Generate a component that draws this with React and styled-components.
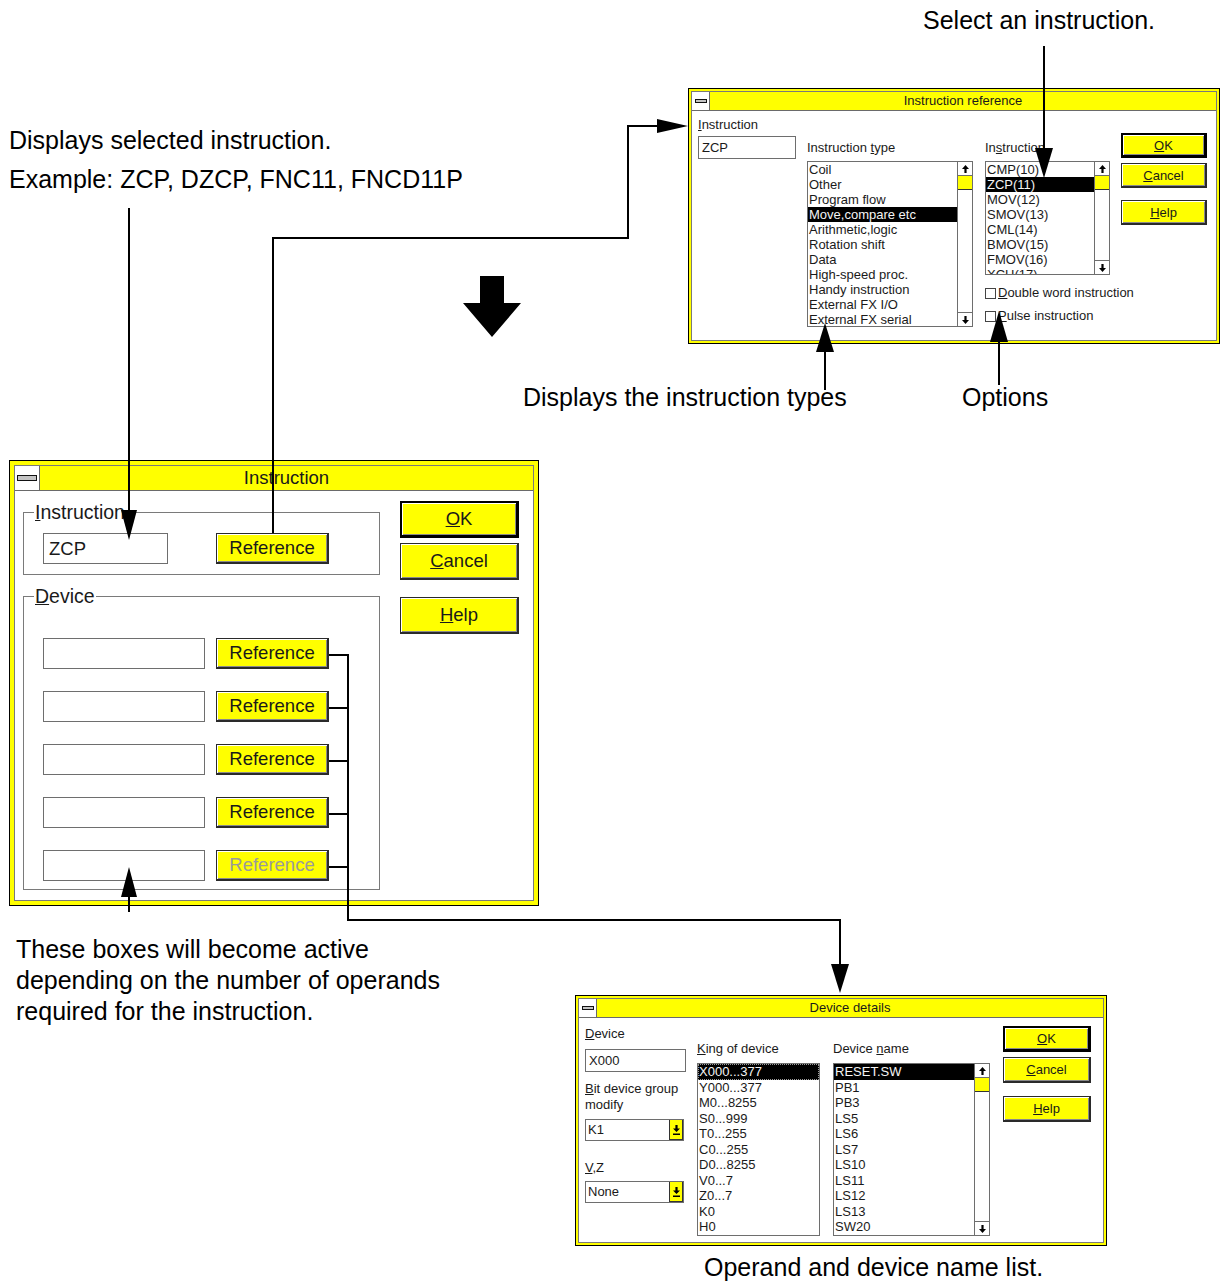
import React from "react";
import styled, { createGlobalStyle } from "styled-components";

const GlobalStyle = createGlobalStyle`
  body { margin: 0; background: #fff; }
  * { box-sizing: border-box; }
`;

const UI = `"Liberation Sans", Arial, sans-serif`;

const Canvas = styled.div`
  position: relative;
  width: 1225px;
  height: 1281px;
  overflow: hidden;
  font-family: "Liberation Sans", Arial, sans-serif;
`;

const Note = styled.div`
  position: absolute;
  left: ${(p) => p.$x}px;
  top: ${(p) => p.$y}px;
  font-size: 25px;
  line-height: 31px;
  color: #000;
  white-space: nowrap;
`;

const Frame = styled.div`
  position: absolute;
  left: ${(p) => p.$x}px;
  top: ${(p) => p.$y}px;
  width: ${(p) => p.$w}px;
  height: ${(p) => p.$h}px;
  border: 1px solid #000;
  background: #ffff00;
  padding: ${(p) => (p.$big ? 4 : 2)}px;
`;

const Inner = styled.div`
  height: 100%;
  border: 1px solid #7a7a7a;
  background: #fff;
  display: flex;
  flex-direction: column;
  font-family: ${UI};
  font-size: ${(p) => (p.$big ? 18.5 : 13)}px;
  color: #1a1a1a;
`;

const TitleBar = styled.div`
  display: flex;
  flex-shrink: 0;
  height: ${(p) => (p.$big ? 25 : 19)}px;
  background: #ffff00;
  border-bottom: 1px solid #6a6a6a;
`;

const SysBox = styled.div`
  width: ${(p) => (p.$big ? 25 : 18)}px;
  background: #fff;
  border-right: 1px solid #6a6a6a;
  display: flex;
  align-items: center;
  justify-content: center;
`;

const SysBar = styled.div`
  width: ${(p) => (p.$big ? 20 : 12)}px;
  height: ${(p) => (p.$big ? 6 : 4)}px;
  border: 1px solid #111;
  background: #c4c4c4;
`;

const Title = styled.div`
  flex: 1;
  text-align: center;
  line-height: ${(p) => (p.$big ? 24 : 18)}px;
  white-space: nowrap;
`;

const Body = styled.div`
  flex: 1;
  display: flex;
  align-items: flex-start;
  padding-left: ${(p) => p.$pl}px;
  padding-top: ${(p) => p.$pt || 0}px;
`;

const Column = styled.div`
  width: ${(p) => p.$w}px;
  margin-left: ${(p) => p.$ml || 0}px;
  padding-top: ${(p) => p.$pt || 0}px;
  display: flex;
  flex-direction: column;
  flex-shrink: 0;
`;

const Label = styled.div`
  line-height: ${(p) => p.$lh || 16}px;
  margin-top: ${(p) => p.$mt || 0}px;
  margin-bottom: ${(p) => p.$mb || 0}px;
  white-space: nowrap;
`;

const Field = styled.div`
  width: ${(p) => p.$w}px;
  height: ${(p) => p.$h}px;
  border: 1px solid #6e6e6e;
  background: #fff;
  padding-left: ${(p) => (p.$big ? 5 : 3)}px;
  line-height: ${(p) => p.$h - 2}px;
  flex-shrink: 0;
`;

const Button = styled.div`
  width: ${(p) => p.$w}px;
  height: ${(p) => p.$h}px;
  margin-top: ${(p) => p.$mt || 0}px;
  background: #ffff00;
  border-style: solid;
  border-color: ${(p) => (p.$default ? "#000" : "#2a2a2a")};
  border-width: ${(p) => (p.$default ? "2px 3px 3px 2px" : "1px 2px 2px 1px")};
  box-shadow: inset 1px 1px 0 #fff, inset -1px -1px 0 #8a8a8a;
  display: flex;
  align-items: center;
  justify-content: center;
  color: ${(p) => (p.$disabled ? "#9a9a9a" : "#1a1a1a")};
  flex-shrink: 0;
  white-space: nowrap;
`;

const ListBox = styled.div`
  width: ${(p) => p.$w}px;
  height: ${(p) => p.$h}px;
  border: 1px solid #6e6e6e;
  background: #fff;
  display: flex;
  overflow: hidden;
`;

const ListItems = styled.div`
  flex: 1;
  overflow: hidden;
  line-height: ${(p) => p.$lh}px;
`;

const Item = styled.div`
  height: ${(p) => p.$lh}px;
  padding-left: 1px;
  white-space: nowrap;
  background: ${(p) => (p.$sel ? "#000" : "transparent")};
  color: ${(p) => (p.$sel ? "#f4f4f4" : "inherit")};
  outline: ${(p) => (p.$focus ? "1px dotted #9a9a9a" : "none")};
  outline-offset: -1px;
`;

const ScrollBar = styled.div`
  width: 15px;
  border-left: 1px solid #6e6e6e;
  display: flex;
  flex-direction: column;
`;

const ArrowBox = styled.div`
  height: 14px;
  border-top: ${(p) => (p.$bottom ? "1px solid #6e6e6e" : "none")};
  border-bottom: ${(p) => (p.$bottom ? "none" : "1px solid #6e6e6e")};
  display: flex;
  align-items: center;
  justify-content: center;
`;

const Thumb = styled.div`
  height: 14px;
  background: #ffff00;
  border-bottom: 1px solid #333;
`;

const Track = styled.div`
  flex: 1;
`;

const CheckRow = styled.div`
  display: flex;
  align-items: center;
  line-height: 16px;
  margin-top: ${(p) => p.$mt}px;
  white-space: nowrap;
`;

const CheckBox = styled.span`
  flex-shrink: 0;
  width: 11px;
  height: 11px;
  border: 1px solid #444;
  margin-right: 2px;
  background: #fff;
`;

const Combo = styled.div`
  width: 99px;
  height: 22px;
  margin-top: ${(p) => p.$mt}px;
  border: 1px solid #6e6e6e;
  display: flex;
`;

const ComboText = styled.div`
  flex: 1;
  padding-left: 2px;
  line-height: 20px;
`;

const ComboBtn = styled.div`
  width: 14px;
  background: #ffff00;
  border-left: 1px solid #333;
  border-right: 1px solid #333;
  border-bottom: 1px solid #333;
  display: flex;
  align-items: center;
  justify-content: center;
`;

const Group = styled.fieldset`
  margin: ${(p) => p.$mt || 0}px 0 0 0;
  padding: ${(p) => p.$pt}px 50px ${(p) => p.$pb}px 19px;
  border: 1px solid #7a7a7a;
  width: 357px;
  min-width: 0;
`;

const Legend = styled.legend`
  padding: 0 1px;
  margin-left: -9px;
  line-height: 22px;
  font-size: 19.5px;
`;

const Row = styled.div`
  display: flex;
  justify-content: space-between;
  align-items: center;
  margin-top: ${(p) => p.$mt || 0}px;
`;

const Overlay = styled.svg`
  position: absolute;
  left: 0;
  top: 0;
  pointer-events: none;
  z-index: 5;
`;

const Arrow = ({ down }) => (
  <svg width="7" height="8" viewBox="0 0 7 8">
    <path
      d={down ? "M3.5 8 L7 4 H4.6 V0 H2.4 V4 H0 Z" : "M3.5 0 L7 4 H4.6 V8 H2.4 V4 H0 Z"}
      fill="#000"
    />
  </svg>
);

const DropArrow = () => (
  <svg width="7" height="10" viewBox="0 0 7 10">
    <path d="M3.5 7 L7 3.5 H4.6 V0 H2.4 V3.5 H0 Z" fill="#000" />
    <rect x="0" y="8.5" width="7" height="1.5" fill="#000" />
  </svg>
);

const Window = ({ x, y, w, h, big, title, children }) => (
  <Frame $x={x} $y={y} $w={w} $h={h} $big={big}>
    <Inner $big={big}>
      <TitleBar $big={big}>
        <SysBox $big={big}>
          <SysBar $big={big} />
        </SysBox>
        <Title $big={big}>{title}</Title>
      </TitleBar>
      {children}
    </Inner>
  </Frame>
);

const List = ({ w, h, lh, items, sel, focus, scroll }) => (
  <ListBox $w={w} $h={h}>
    <ListItems $lh={lh}>
      {items.map((t, i) => (
        <Item key={t} $lh={lh} $sel={i === sel} $focus={focus && i === sel}>
          {t}
        </Item>
      ))}
    </ListItems>
    {scroll && (
      <ScrollBar>
        <ArrowBox>
          <Arrow />
        </ArrowBox>
        <Thumb />
        <Track />
        <ArrowBox $bottom>
          <Arrow down />
        </ArrowBox>
      </ScrollBar>
    )}
  </ListBox>
);

const types = [
  "Coil", "Other", "Program flow", "Move,compare etc", "Arithmetic,logic",
  "Rotation shift", "Data", "High-speed proc.", "Handy instruction",
  "External FX I/O", "External FX serial",
];
const instructions = [
  "CMP(10)", "ZCP(11)", "MOV(12)", "SMOV(13)", "CML(14)", "BMOV(15)", "FMOV(16)", "XCH(17)",
];
const kinds = [
  "X000...377", "Y000...377", "M0...8255", "S0...999", "T0...255", "C0...255",
  "D0...8255", "V0...7", "Z0...7", "K0", "H0",
];
const names = [
  "RESET.SW", "PB1", "PB3", "LS5", "LS6", "LS7", "LS10", "LS11", "LS12", "LS13", "SW20",
];

const ReferenceDialog = () => (
  <Window x={688} y={88} w={532} h={256} title="Instruction reference">
    <Body $pl={6}>
      <Column $w={98} $pt={6}>
        <Label $mb={3}><u>I</u>nstruction</Label>
        <Field $w={98} $h={23}>ZCP</Field>
      </Column>
      <Column $w={166} $ml={11} $pt={29}>
        <Label $mb={5}>Instruction <u>t</u>ype</Label>
        <List w={166} h={166} lh={15} items={types} sel={3} scroll />
      </Column>
      <Column $w={125} $ml={12} $pt={29}>
        <Label $mb={5}>In<u>s</u>truction</Label>
        <List w={125} h={114} lh={15} items={instructions} sel={1} scroll />
        <CheckRow $mt={10}>
          <CheckBox />
          <span><u>D</u>ouble word instruction</span>
        </CheckRow>
        <CheckRow $mt={7}>
          <CheckBox />
          <span><u>P</u>ulse instruction</span>
        </CheckRow>
      </Column>
      <Column $w={86} $ml={11} $pt={22}>
        <Button $w={86} $h={25} $default><u>O</u>K</Button>
        <Button $w={86} $h={25} $mt={5}><u>C</u>ancel</Button>
        <Button $w={86} $h={25} $mt={12}><u>H</u>elp</Button>
      </Column>
    </Body>
  </Window>
);

const InstructionDialog = () => (
  <Window x={9} y={460} w={530} h={446} big title="Instruction">
    <Body $pl={8} $pt={10}>
      <Column $w={357}>
        <Group $pt={10} $pb={10}>
          <Legend><u>I</u>nstruction</Legend>
          <Row>
            <Field $w={125} $h={31} $big>ZCP</Field>
            <Button $w={113} $h={31}>Reference</Button>
          </Row>
        </Group>
        <Group $mt={10} $pt={31} $pb={8}>
          <Legend><u>D</u>evice</Legend>
          {[0, 1, 2, 3, 4].map((i) => (
            <Row key={i} $mt={i ? 22 : 0}>
              <Field $w={162} $h={31} $big />
              <Button $w={113} $h={31} $disabled={i === 4}>Reference</Button>
            </Row>
          ))}
        </Group>
      </Column>
      <Column $w={119} $ml={20}>
        <Button $w={119} $h={37} $default><u>O</u>K</Button>
        <Button $w={119} $h={37} $mt={5}><u>C</u>ancel</Button>
        <Button $w={119} $h={37} $mt={17}><u>H</u>elp</Button>
      </Column>
    </Body>
  </Window>
);

const DeviceDialog = () => (
  <Window x={575} y={995} w={532} h={251} title="Device details">
    <Body $pl={6}>
      <Column $w={101} $pt={8}>
        <Label $mb={7}><u>D</u>evice</Label>
        <Field $w={101} $h={23}>X000</Field>
        <Label $mt={9} $lh={15.5}><u>B</u>it device group<br />modify</Label>
        <Combo $mt={7}>
          <ComboText>K1</ComboText>
          <ComboBtn><DropArrow /></ComboBtn>
        </Combo>
        <Label $mt={19}><u>V</u>,Z</Label>
        <Combo $mt={5}>
          <ComboText>None</ComboText>
          <ComboBtn><DropArrow /></ComboBtn>
        </Combo>
      </Column>
      <Column $w={123} $ml={11} $pt={23}>
        <Label $mb={6}><u>K</u>ing of device</Label>
        <List w={123} h={173} lh={15.5} items={kinds} sel={0} focus />
      </Column>
      <Column $w={157} $ml={13} $pt={23}>
        <Label $mb={6}>Device <u>n</u>ame</Label>
        <List w={157} h={173} lh={15.5} items={names} sel={0} scroll />
      </Column>
      <Column $w={88} $ml={13} $pt={8}>
        <Button $w={88} $h={26} $default><u>O</u>K</Button>
        <Button $w={88} $h={26} $mt={5}><u>C</u>ancel</Button>
        <Button $w={88} $h={26} $mt={13}><u>H</u>elp</Button>
      </Column>
    </Body>
  </Window>
);

const Connectors = () => (
  <Overlay width="1225" height="1281" viewBox="0 0 1225 1281">
    <g stroke="#000" strokeWidth="2" fill="none">
      <path d="M1044 46 V152" />
      <path d="M273 533 V238 H628 V126 H660" />
      <path d="M129 208 V512" />
      <path d="M825 390 V350" />
      <path d="M999 385 V340" />
      <path d="M329 655 H348 M329 708 H348 M329 761 H348 M329 814 H348 M329 867 H348" />
      <path d="M348 654 V920 H840 V966" />
      <path d="M129 912 V895" />
    </g>
    <g fill="#000">
      <polygon points="1035,148 1053,148 1044,178" />
      <polygon points="657,119 657,133 688,126" />
      <polygon points="121,510 137,510 129,540" />
      <polygon points="816,352 834,352 825,323" />
      <polygon points="990,342 1008,342 999,311" />
      <polygon points="831,964 849,964 840,993" />
      <polygon points="121,897 137,897 129,867" />
      <polygon points="480,276 504,276 504,303 521,303 492,337 463,303 480,303" />
    </g>
  </Overlay>
);

export default function App() {
  return (
    <Canvas>
      <GlobalStyle />
      <Note $x={923} $y={5}>Select an instruction.</Note>
      <Note $x={9} $y={125}>Displays selected instruction.</Note>
      <Note $x={9} $y={164}>Example: ZCP, DZCP, FNC11, FNCD11P</Note>
      <Note $x={523} $y={382}>Displays the instruction types</Note>
      <Note $x={962} $y={382}>Options</Note>
      <Note $x={16} $y={934}>
        These boxes will become active
        <br />
        depending on the number of operands
        <br />
        required for the instruction.
      </Note>
      <Note $x={704} $y={1252}>Operand and device name list.</Note>
      <ReferenceDialog />
      <InstructionDialog />
      <DeviceDialog />
      <Connectors />
    </Canvas>
  );
}
